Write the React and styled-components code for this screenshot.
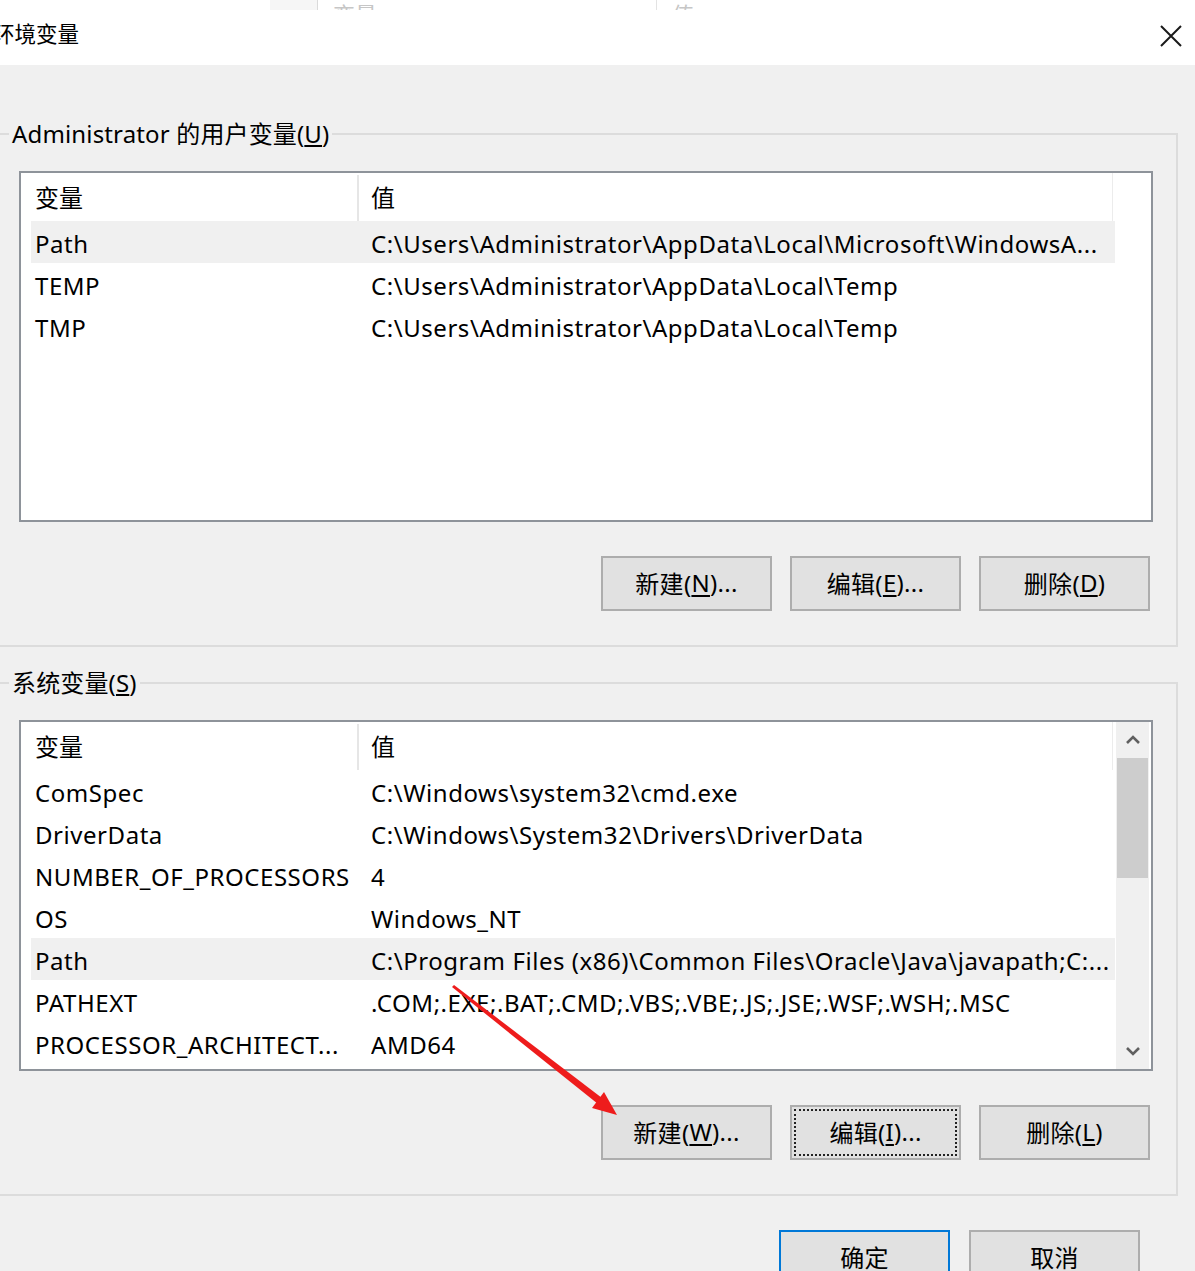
import React from 'react';
import styled, { createGlobalStyle } from 'styled-components';

const Global = createGlobalStyle`
  html, body { margin: 0; padding: 0; background: #f0f0f0; }
  body { overflow: hidden; font-family: "Noto Sans", "Noto Sans CJK SC", sans-serif; }
  * { box-sizing: border-box; }
`;

const Page = styled.div`
  position: relative;
  width: 1195px;
  height: 1271px;
  overflow: hidden;
  background: #f0f0f0;
  color: #000;
  font-family: "Noto Sans", "Noto Sans CJK SC", sans-serif;
`;

const GhostStrip = styled.div`
  height: 10px;
  overflow: hidden;
  background: #fff;
  display: flex;
  padding-left: 270px;
`;

const GhostCell = styled.div`
  width: 48px;
  height: 10px;
  background: #f6f6f6;
  border-right: 1px solid #dadada;
`;

const GhostLabel = styled.div`
  width: ${p => p.$w}px;
  height: 10px;
  padding: 2px 0 0 ${p => p.$pad}px;
  border-left: ${p => (p.$line ? '1px solid #e3e3e3' : 'none')};
  font-size: 22px;
  line-height: 24px;
  color: #c6c6c6;
  white-space: nowrap;
`;

const TitleBar = styled.div`
  height: 55px;
  background: #fff;
  display: flex;
  align-items: center;
  justify-content: space-between;
  padding-bottom: 7px;
`;

const Title = styled.div`
  margin-left: -7px;
  font-size: 21.5px;
  line-height: 28px;
  color: #000;
  white-space: nowrap;
`;

const CloseIcon = styled.svg`
  width: 22px;
  height: 22px;
  margin-right: 13px;
  margin-top: 4px;
`;

const Body = styled.div`
  padding-top: 54px;
`;

const Group = styled.fieldset`
  margin: 0 0 0 -8px;
  width: 1186px;
  padding: 0;
  min-width: 0;
  border: 2px solid #dcdcdc;
  & + & {
    margin-top: 21px;
  }
`;

const Legend = styled.legend`
  margin-left: 15px;
  padding: 0 3px;
  font-size: 24px;
  letter-spacing: 0.15px;
  line-height: 30px;
  color: #000;
  white-space: nowrap;
`;

const GroupBody = styled.div`
  padding: 22px 23px 34px 25px;
`;

const ListBox = styled.div`
  height: 351px;
  border: 2px solid #8e939a;
  background: #fff;
  display: flex;
  align-items: stretch;
  overflow: hidden;
`;

const Table = styled.div`
  width: 1084px;
  margin-left: 10px;
  flex: none;
`;

const HeaderRow = styled.div`
  display: grid;
  grid-template-columns: 328px 1fr;
  height: 48px;
  align-items: stretch;
  border-right: 1px solid #ececec;
  width: 1082px;
`;

const HeaderCell = styled.div`
  display: flex;
  align-items: center;
  padding-left: ${p => p.$pad}px;
  padding-bottom: 4px;
  border-right: ${p => (p.$sep ? '2px solid #e6e6e6' : 'none')};
  margin: 2px 0 0;
  font-size: 24px;
  white-space: nowrap;
`;

const Row = styled.div`
  display: grid;
  grid-template-columns: 340px 1fr;
  height: 42px;
  align-items: center;
  background: ${p => (p.$selected ? '#f0f0f0' : 'transparent')};
  font-size: 24px;
  letter-spacing: 0.55px;
  white-space: nowrap;
`;

const Cell = styled.div`
  padding-left: ${p => p.$pad}px;
  padding-top: 2px;
  overflow: hidden;
  white-space: nowrap;
`;

const Scrollbar = styled.div`
  width: 33px;
  margin-left: 1px;
  background: #f0f0f0;
  display: flex;
  flex-direction: column;
  flex: none;
`;

const ScrollArrow = styled.div`
  height: 36px;
  display: flex;
  align-items: center;
  justify-content: center;
`;

const Thumb = styled.div`
  height: 120px;
  margin: 0 1px;
  background: #cdcdcd;
`;

const Track = styled.div`
  flex: 1;
`;

const ButtonRow = styled.div`
  display: flex;
  justify-content: flex-end;
  gap: 18px;
  margin-top: 34px;
  padding-right: 3px;
`;

const Button = styled.div`
  width: 171px;
  height: 55px;
  border: 2px solid ${p => (p.$default ? '#0078d7' : '#adadad')};
  background: #e1e1e1;
  display: flex;
  align-items: center;
  justify-content: center;
  padding-bottom: 3px;
  font-size: 24px;
  letter-spacing: 0.3px;
  color: #000;
  white-space: nowrap;
  outline: ${p => (p.$focus ? '2px dotted #222' : 'none')};
  outline-offset: -6px;
  u {
    text-decoration-thickness: 1.5px;
    text-underline-offset: 3px;
  }
`;

const Footer = styled.div`
  display: flex;
  justify-content: flex-end;
  gap: 19px;
  margin-top: 34px;
  padding-right: 55px;
`;

const ArrowOverlay = styled.svg`
  position: absolute;
  left: 0;
  top: 0;
  width: 1195px;
  height: 1271px;
  pointer-events: none;
`;

const Chevron = ({ up }) => (
  <svg width="16" height="10" viewBox="0 0 16 10">
    <polyline
      points={up ? '2,8 8,2 14,8' : '2,2 8,8 14,2'}
      fill="none"
      stroke="#606060"
      strokeWidth="2.6"
    />
  </svg>
);

const userVars = [
  ['Path', 'C:\\Users\\Administrator\\AppData\\Local\\Microsoft\\WindowsA...', true],
  ['TEMP', 'C:\\Users\\Administrator\\AppData\\Local\\Temp'],
  ['TMP', 'C:\\Users\\Administrator\\AppData\\Local\\Temp'],
];

const sysVars = [
  ['ComSpec', 'C:\\Windows\\system32\\cmd.exe'],
  ['DriverData', 'C:\\Windows\\System32\\Drivers\\DriverData'],
  ['NUMBER_OF_PROCESSORS', '4'],
  ['OS', 'Windows_NT'],
  ['Path', 'C:\\Program Files (x86)\\Common Files\\Oracle\\Java\\javapath;C:...', true],
  ['PATHEXT', '.COM;.EXE;.BAT;.CMD;.VBS;.VBE;.JS;.JSE;.WSF;.WSH;.MSC'],
  ['PROCESSOR_ARCHITECT...', 'AMD64'],
  ['PROCESSOR_IDENTIFIER', 'Intel64 Family 6'],
];

const VarList = ({ rows, scroll }) => (
  <ListBox>
    <Table>
      <HeaderRow>
        <HeaderCell $pad={4} $sep>变量</HeaderCell>
        <HeaderCell $pad={12}>值</HeaderCell>
      </HeaderRow>
      {rows.map(([k, v, sel], i) => (
        <Row key={i} $selected={sel}>
          <Cell $pad={4}>{k}</Cell>
          <Cell $pad={0}>{v}</Cell>
        </Row>
      ))}
    </Table>
    {scroll && (
      <Scrollbar>
        <ScrollArrow><Chevron up /></ScrollArrow>
        <Thumb />
        <Track />
        <ScrollArrow><Chevron /></ScrollArrow>
      </Scrollbar>
    )}
  </ListBox>
);

const Buttons = ({ keys, focusEdit }) => (
  <ButtonRow>
    <Button>新建(<u>{keys[0]}</u>)...</Button>
    <Button $focus={focusEdit}>编辑(<u>{keys[1]}</u>)...</Button>
    <Button>删除(<u>{keys[2]}</u>)</Button>
  </ButtonRow>
);

export default function App() {
  return (
    <Page>
      <Global />
      <GhostStrip>
        <GhostCell />
        <GhostLabel $w={338} $pad={15}>变量</GhostLabel>
        <GhostLabel $w={200} $pad={15} $line>值</GhostLabel>
      </GhostStrip>
      <TitleBar>
        <Title>环境变量</Title>
        <CloseIcon viewBox="0 0 22 22">
          <path d="M1 1 L21 21 M21 1 L1 21" stroke="#1a1a1a" strokeWidth="2" fill="none" />
        </CloseIcon>
      </TitleBar>
      <Body>
        <Group>
          <Legend>Administrator 的用户变量(<u>U</u>)</Legend>
          <GroupBody>
            <VarList rows={userVars} />
            <Buttons keys={['N', 'E', 'D']} />
          </GroupBody>
        </Group>
        <Group>
          <Legend>系统变量(<u>S</u>)</Legend>
          <GroupBody>
            <VarList rows={sysVars} scroll />
            <Buttons keys={['W', 'I', 'L']} focusEdit />
          </GroupBody>
        </Group>
        <Footer>
          <Button $default>确定</Button>
          <Button>取消</Button>
        </Footer>
      </Body>
      <ArrowOverlay viewBox="0 0 1195 1271">
        <polygon points="452,987 454,985 602,1098 598,1104" fill="#ee1c1c" />
        <polygon points="617,1115 592,1108 604,1092" fill="#ee1c1c" />
      </ArrowOverlay>
    </Page>
  );
}
